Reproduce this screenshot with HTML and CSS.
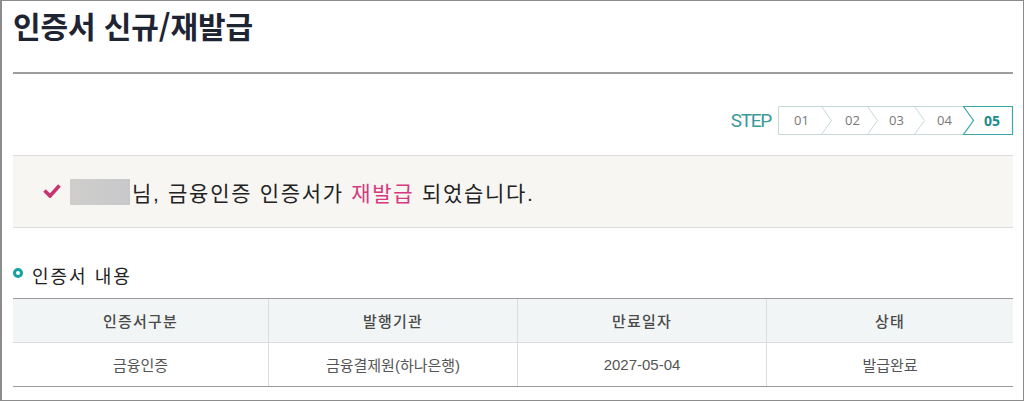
FILE: index.html
```html
<!DOCTYPE html>
<html lang="ko">
<head>
<meta charset="utf-8">
<title>인증서 신규/재발급</title>
<link rel="stylesheet" href="styles.css">
</head>
<body>
<div class="frame">
  <header class="page-head">
    <h1 class="title">인증서 신규/재발급</h1>
  </header>

  <div class="step-row">
    <span class="step-label">STEP</span>
    <div class="steps">
      <svg class="steps-bg" width="236" height="30" viewBox="0 0 236 30" aria-hidden="true">
        <path d="M185.5 0.5 H0.5 V28.5 H185.5" fill="none" stroke="#c6dada" stroke-width="1"/>
        <path d="M43.5 0.5 L53.5 14.5 L43.5 28.5" fill="none" stroke="#c6dada" stroke-width="1"/>
        <path d="M89.5 0.5 L99.5 14.5 L89.5 28.5" fill="none" stroke="#c6dada" stroke-width="1"/>
        <path d="M136.5 0.5 L146.5 14.5 L136.5 28.5" fill="none" stroke="#c6dada" stroke-width="1"/>
        <path d="M185.5 0.5 L195.5 14.5 L185.5 28.5 H234.5 V0.5 Z" fill="none" stroke="#3aa6a6" stroke-width="1.2"/>
      </svg>
      <span class="step s1">01</span>
      <span class="step s2">02</span>
      <span class="step s3">03</span>
      <span class="step s4">04</span>
      <span class="step s5 active">05</span>
    </div>
  </div>

  <div class="notice">
    <svg class="check" width="18" height="14" viewBox="0 0 18 14" aria-hidden="true">
      <path d="M1.5 6.5 L7 12 L16.5 1.5" fill="none" stroke="#c8346f" stroke-width="3.6"/>
    </svg>
    <span class="masked"></span>
    <p class="notice-text">님, 금융인증 인증서가 <em class="hl">재발급</em> 되었습니다.</p>
  </div>

  <h2 class="sec-title"><span class="dot"></span>인증서 내용</h2>

  <div class="tbl">
    <div class="tr th-row">
      <div class="cell th">인증서구분</div>
      <div class="cell th">발행기관</div>
      <div class="cell th">만료일자</div>
      <div class="cell th">상태</div>
    </div>
    <div class="tr">
      <div class="cell">금융인증</div>
      <div class="cell">금융결제원(하나은행)</div>
      <div class="cell">2027-05-04</div>
      <div class="cell">발급완료</div>
    </div>
  </div>
</div>
</body>
</html>
```

FILE: styles.css
```css
* { box-sizing: border-box; }

html, body {
  margin: 0;
  padding: 0;
  background: #fff;
}

body {
  font-family: "Liberation Sans", "Noto Sans CJK KR", sans-serif;
  color: #333;
}

.frame {
  width: 1024px;
  height: 401px;
  border: 1px solid #8c8c8c;
  border-left-width: 2px;
  padding: 0 10px 0 11px;
  overflow: hidden;
}

.page-head {
  height: 73px;
  border-bottom: 2px solid #9e9e9e;
}

.title {
  margin: 0;
  padding-top: 3px;
  font-family: "Noto Sans CJK KR", sans-serif;
  font-size: 30px;
  font-weight: 700;
  line-height: 42px;
  letter-spacing: -0.1px;
  color: #1f2433;
}

.step-row {
  display: flex;
  justify-content: flex-end;
  align-items: center;
  margin-top: 32px;
  height: 29px;
}

.step-label {
  font-family: "Roboto", sans-serif;
  font-size: 19px;
  letter-spacing: -1.3px;
  color: #3a9a9a;
  margin-right: 7px;
  line-height: 29px;
}

.steps {
  position: relative;
  display: flex;
  width: 236px;
  height: 29px;
  margin-right: -1px;
}

.steps-bg {
  position: absolute;
  left: 0;
  top: 0;
}

.step {
  position: relative;
  font-family: "Open Sans", sans-serif;
  font-size: 13px;
  line-height: 29px;
  color: #777;
}

.s1 { width: 67px; padding-left: 16px; }
.s2 { width: 44px; }
.s3 { width: 48px; }
.s4 { width: 47px; }
.s5 { flex: 1; }

.active {
  font-weight: 700;
  font-size: 14px;
  color: #1f8c8c;
}

.notice {
  display: flex;
  align-items: center;
  margin-top: 20px;
  height: 73px;
  background: #f7f6f2;
  border-top: 1px solid #dcdcdc;
  border-bottom: 1px solid #dcdcdc;
  padding-left: 30px;
}

.check {
  flex: none;
  margin-right: 9px;
  margin-top: -2px;
}

.masked {
  flex: none;
  width: 60px;
  height: 26px;
  background: linear-gradient(90deg, #cfcecd 0%, #cbcbcb 60%, #c8c8cb 100%);
  margin-right: 2px;
}

.notice-text {
  margin: 0;
  font-family: "Liberation Sans", "Noto Sans CJK KR", sans-serif;
  font-size: 21px;
  letter-spacing: 1.7px;
  color: #222;
}

.hl {
  font-style: normal;
  color: #d53a7f;
}

.sec-title {
  display: flex;
  align-items: center;
  margin: 35px 0 0;
  height: 24px;
  font-family: "Noto Sans CJK KR", sans-serif;
  font-size: 18px;
  font-weight: 400;
  letter-spacing: 2px;
  color: #222;
}

.dot {
  width: 10px;
  height: 10px;
  border: 3px solid #16a2a2;
  border-radius: 50%;
  margin-right: 9px;
  margin-top: -4px;
}

.tbl {
  margin-top: 11px;
  border-top: 1px solid #9a9a9a;
  border-bottom: 1px solid #9a9a9a;
}

.tr {
  display: grid;
  grid-template-columns: 256px 249px 249px 1fr;
}

.th-row {
  background: #f1f5f5;
  border-bottom: 1px solid #dcdcdc;
}

.cell {
  height: 43px;
  display: flex;
  align-items: center;
  justify-content: center;
  border-right: 1px solid #dcdcdc;
  font-size: 15px;
  color: #555;
}

.cell:last-child { border-right: 0; }

.th {
  font-family: "Noto Sans CJK KR", sans-serif;
  font-weight: 500;
  letter-spacing: 1.2px;
  color: #4a4a4a;
}
```
